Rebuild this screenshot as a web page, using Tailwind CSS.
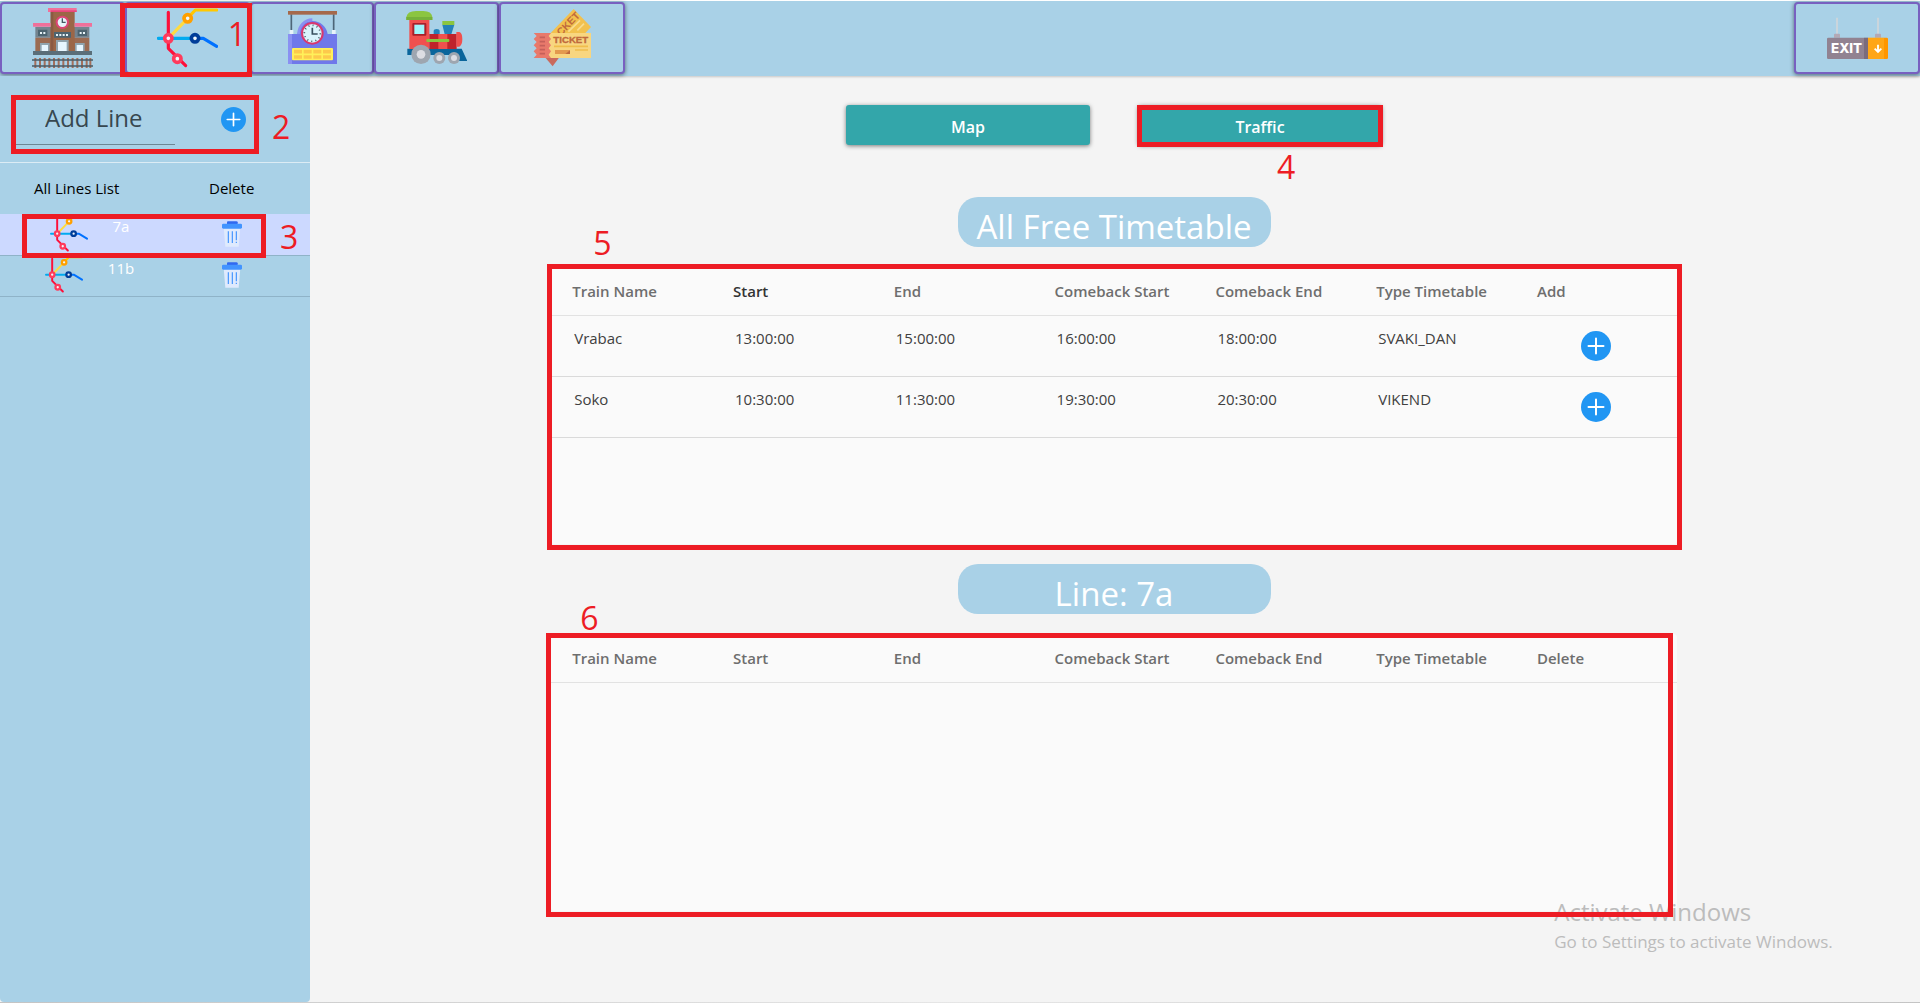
<!DOCTYPE html>
<html lang="en">
<head>
<meta charset="utf-8">
<title>Railway – Lines</title>
<script src="https://cdn.jsdelivr.net/npm/@tailwindcss/browser@4"></script>
</head>
<body class="flex min-h-screen flex-col bg-[#f4f4f4] font-['Open_Sans','Noto_Sans',sans-serif]">

<svg class="hidden" aria-hidden="true">
  <symbol id="line-map" viewBox="471 27 183 180">
    <g fill="none" stroke-width="9.5" stroke-linecap="round" stroke-linejoin="round">
      <path d="M505 118L563 58" stroke="#fedb41"/>
      <path d="M565 55L586 33H650" stroke="#ffc800"/>
      <path d="M475 118H580" stroke="#00aaf0"/>
      <path d="M590 118H610L650 142" stroke="#0071ff"/>
      <path d="M505 40V148L557 200" stroke="#fd0f3a"/>
    </g>
    <g fill="#f1f7fb" stroke-width="11">
      <circle cx="563" cy="58" r="11" stroke="#ffa000"/>
      <circle cx="505" cy="118" r="11" stroke="#ff3b5c"/>
      <circle cx="585" cy="118" r="11" stroke="#003d99"/>
      <circle cx="532" cy="179" r="11" stroke="#ff3b5c"/>
    </g>
  </symbol>
  <symbol id="plus" viewBox="0 0 30 30">
    <circle cx="15" cy="15" r="15" fill="#2196f3"/>
    <path d="M15 7.500V22.500M7.500 15H22.500" stroke="#fff" stroke-width="2" stroke-linecap="round"/>
  </symbol>
  <symbol id="trash" viewBox="0 0 60 78">
    <path d="M5 18H55L50 77H10Z" fill="#dfeafd"/>
    <path d="M15 10V4Q15 1 18 1H43Q47 1 47 4V10Z" fill="#3069f0"/>
    <rect y="8" width="60" height="15" rx="4" fill="#4294ff"/>
    <path d="M19 31V66M31 31V66M43 31V58M43 62V66" stroke="#4294ff" stroke-width="3.500"/>
  </symbol>
</svg>

<header class="flex justify-between border-t border-white bg-[#a9d1e7] pt-px pb-[2px] shadow-[0_1px_2px_#00000030]">
  <nav class="flex">
    <button aria-label="Stations" class="flex h-[72px] w-[125px] items-center justify-center rounded border-2 border-[#7860c0] bg-[#a9d1e7] shadow-[0_1px_4px_#00000080]">
      <svg class="h-[60px] w-[61px]" viewBox="96 27 183 180">
        <rect x="106" y="84" width="162" height="32" fill="#74848f"/>
        <rect x="106" y="116" width="162" height="42" fill="#9b6b52"/>
        <rect x="152" y="38" width="72" height="120" fill="#9b6647"/>
        <rect x="152" y="38" width="8" height="120" fill="#8a5a43"/>
        <rect x="144" y="27" width="86" height="12" fill="#f0709a"/><rect x="152" y="34" width="78" height="5" fill="#e8457b"/>
        <path d="M99 72H152V83H99ZM224 72H276V83H224Z" fill="#f0709a"/>
        <circle cx="187" cy="70" r="17" fill="#e6f4fa" stroke="#dc4475" stroke-width="6"/>
        <path d="M187 58V70H197" fill="none" stroke="#455a64" stroke-width="4"/>
        <path d="M114 92H142V111H114ZM233 92H261V111H233ZM162 99H213V116H162Z" fill="#4d6470"/>
        <path d="M120 102H136M239 102H255M168 108H208" stroke="#e8f4f8" stroke-width="6" stroke-dasharray="6 4"/>
        <path d="M120 132H149V158H120ZM225 132H254V158H225ZM168 123H206V158H168Z" fill="#90a4ae"/>
        <path d="M125 138H144V158H125ZM230 138H249V158H230ZM174 129H200V158H174Z" fill="#e6f6ff"/>
        <rect x="99" y="156" width="177" height="12" fill="#5a6e79"/>
        <path d="M106 177V207M120 177V207M134 177V207M148 177V207M162 177V207M176 177V207M190 177V207M204 177V207M218 177V207M232 177V207M246 177V207M260 177V207M271 177V207" stroke="#a46f5b" stroke-width="6"/>
        <path d="M96 183H279M96 201H279" stroke="#4a5b65" stroke-width="4"/>
      </svg>
    </button>
    <div class="relative">
      <button aria-label="Lines" class="flex h-[72px] w-[125px] items-center justify-center rounded border-2 border-[#7860c0] bg-[#a9d1e7] shadow-[0_1px_4px_#00000080]">
        <svg class="h-[60px] w-[61px]"><use href="#line-map"/></svg>
      </button>
      <div class="pointer-events-none absolute top-px -right-[2px] -bottom-[3px] -left-[5px] z-10 border-5 border-[#ed1c24]"></div>
      <span class="absolute top-2 right-1 z-10 text-[32px] leading-12 text-[#ed1c24]">1</span>
    </div>
    <button aria-label="Timetables" class="flex h-[72px] w-[124px] items-center justify-center rounded border-2 border-[#7860c0] bg-[#a9d1e7] shadow-[0_1px_4px_#00000080]">
      <svg class="h-[60px] w-[61px]" viewBox="96 27 183 180">
        <path d="M124 46V96M251 46V96" stroke="#4d6678" stroke-width="5"/>
        <rect x="114" y="36" width="147" height="11" fill="#a5694b"/>
        <path d="M119 93H130V106H119ZM246 93H257V106H246Z" fill="#e8f2fa"/>
        <path d="M114 105H142A46 46 0 0 1 233 105H261V195H114Z" fill="#7078ea"/>
        <path d="M114 105H126V195H114ZM142 105A46 46 0 0 1 187 58V66A38 38 0 0 0 150 105Z" fill="#8a90f2"/>
        <circle cx="187" cy="103" r="31" fill="#d9f4fc" stroke="#d9376e" stroke-width="6"/>
        <circle cx="187" cy="103" r="24" fill="none" stroke="#455a64" stroke-width="5" stroke-dasharray="3 9.560"/>
        <path d="M187 86V105H203" fill="none" stroke="#37505e" stroke-width="5"/>
        <rect x="126" y="147" width="123" height="37" rx="3" fill="#fff05a"/>
        <path d="M132 158H244M132 174H244" stroke="#fdc94c" stroke-width="11" stroke-dasharray="24 5"/>
      </svg>
    </button>
    <button aria-label="Trains" class="flex h-[72px] w-[125px] items-center justify-center rounded border-2 border-[#7860c0] bg-[#a9d1e7] shadow-[0_1px_4px_#00000080]">
      <svg class="h-[60px] w-[61px]" viewBox="470 27 183 180">
        <path d="M474 149H637L654 186H630L620 168H474Z" fill="#0a659b"/>
        <rect x="480" y="60" width="60" height="90" fill="#f0504e"/>
        <path d="M471 63V54Q474 36 500 36H522Q547 36 549 54V63Z" fill="#8bc540"/>
        <path d="M471 54H549V63H471Z" fill="#76b03a"/>
        <rect x="489" y="72" width="42" height="38" rx="3" fill="#a8202a"/><rect x="495" y="77" width="30" height="28" fill="#a0f5fa"/>
        <path d="M553 106V96Q553 90 562 90Q571 90 571 96V106ZM579 77H615L606 106H586Z" fill="#2481b9"/>
        <rect x="579" y="66" width="36" height="12" fill="#8bc540"/>
        <rect x="540" y="105" width="82" height="45" fill="#bf222b"/>
        <path d="M567 105H594V150H567ZM621 99H630Q639 102 639 120Q639 138 630 143H621Z" fill="#f0504e"/>
        <rect x="531" y="120" width="69" height="9" rx="3" fill="#8bc540"/>
        <g fill="#9ea6b0"><circle cx="515" cy="166" r="29"/><circle cx="570" cy="177" r="18"/><circle cx="614" cy="177" r="18"/></g>
        <g fill="#dcdde3"><circle cx="515" cy="166" r="13"/><circle cx="570" cy="177" r="9"/><circle cx="614" cy="177" r="9"/></g>
      </svg>
    </button>
    <button aria-label="Tickets" class="flex h-[72px] w-[126px] items-center justify-center rounded border-2 border-[#7860c0] bg-[#a9d1e7] shadow-[0_1px_4px_#00000080]">
      <svg class="h-[60px] w-[61px]" viewBox="846 27 183 180">
        <path d="M885 175L908 202L928 175Z" fill="#c96a5d"/>
        <path d="M902 102L971 30L1023 84L1004 104Z" fill="#f2c14e"/>
        <path d="M955 98L990 64M982 94L1002 74" stroke="#f9dc8e" stroke-width="5"/>
        <text transform="translate(933 112) rotate(-46)" font-family="Liberation Sans" font-weight="700" font-size="31" fill="#c0693c">CKET</text>
        <rect x="896" y="102" width="127" height="75" fill="#f8d680"/>
        <path d="M851 102H903L896 111L903 120L896 129L903 139L896 148L903 157L896 167L903 177H851L860 167L851 157L860 148L851 139L860 129L851 120L860 111Z" fill="#e8796b"/>
        <path d="M869 115H885M869 128H885M869 140H885M869 152H885M869 164H885" stroke="#c5605a" stroke-width="5"/>
        <text x="910" y="132" font-family="Liberation Sans" font-weight="700" font-size="29" stroke="#c0693c" fill="#c0693c">TICKET</text>
        <path d="M912 142H1014M975 153H1014" stroke="#f0bd4b" stroke-width="5"/>
        <path d="M915 153H960L948 165H915Z" fill="#e39a4e"/><path d="M960 153V165H946Z" fill="#c0693c"/>
      </svg>
    </button>
  </nav>
  <button aria-label="Exit" class="flex h-[72px] w-[126px] items-center justify-center rounded border-2 border-[#7860c0] bg-[#a9d1e7] shadow-[0_1px_4px_#00000080]">
    <svg class="h-[60px] w-[61px]" viewBox="201 25 183 180">
      <path d="M231 54V103M354 54V103" stroke="#cad5dc" stroke-width="6"/>
      <path d="M222 114V105Q222 102 225 102H237Q240 102 240 105V114ZM345 114V105Q345 102 348 102H360Q363 102 363 105V114Z" fill="#b3a9b6"/>
      <path d="M205 114H312V178H205Q201 178 201 174V118Q201 114 205 114Z" fill="#918291"/>
      <path d="M312 114H324V178H312Z" fill="#7b6c7d"/>
      <path d="M324 114H372V178H324Z" fill="#ffa617"/>
      <path d="M372 114H380Q384 114 384 118V174Q384 178 380 178H372Z" fill="#ff9600"/>
      <text x="213" y="160" font-family="Inter" font-weight="800" font-size="40" fill="#fff">EXIT</text>
      <path d="M354 135V157M344 147L354 157L364 147" fill="none" stroke="#fff" stroke-width="5.500"/>
    </svg>
  </button>
</header>

<div class="flex grow">
  <aside class="w-[310px] shrink-0 rounded-b bg-[#a9d1e7]">
    <form class="relative flex h-[87px] items-start border-b border-[#dcecf5] pt-[26px]">
      <input aria-label="Add Line" placeholder="Add Line" class="ml-3 h-[43px] w-[163px] border-b border-[#6d8794] pr-2 pb-3 pl-[33px] text-[24px] outline-none placeholder:text-[#37474f]">
      <button type="button" aria-label="Add line" class="mt-[5px] ml-[46px]"><svg class="size-[25px]"><use href="#plus"/></svg></button>
      <div class="pointer-events-none absolute top-[19px] left-[11px] h-[59px] w-[248px] border-5 border-[#ed1c24]"></div>
      <span class="absolute top-[27px] left-[272px] text-[32px] leading-12 text-[#ed1c24]">2</span>
    </form>
    <table class="w-full table-fixed text-left">
      <colgroup><col class="w-24"><col class="w-[50px]"><col></colgroup>
      <thead>
        <tr class="h-[51px] text-[15px] text-black">
          <th colspan="2" class="pl-[34px] font-normal">All Lines List</th>
          <th class="pl-[63px] font-normal">Delete</th>
        </tr>
      </thead>
      <tbody class="text-[15px] text-white">
        <tr class="relative h-[41px] border-b border-[#8fb3c8] bg-[#ccd9ff] align-top">
          <td class="pl-[50px]"><svg class="mt-px block h-[37px] w-[38px]"><use href="#line-map"/></svg></td>
          <td class="text-center leading-6">7a</td>
          <td class="pl-[76px]">
            <button aria-label="Delete line 7a" class="mt-[7px] block"><svg class="h-[26px] w-5"><use href="#trash"/></svg></button>
            <div class="pointer-events-none absolute top-0 left-[22px] h-11 w-[244px] border-5 border-[#ed1c24]"></div>
            <span class="absolute -top-px left-[280px] text-[32px] leading-12 text-[#ed1c24]">3</span>
          </td>
        </tr>
        <tr class="h-[41px] border-b border-[#8fb3c8] align-top">
          <td class="pl-[45px]"><svg class="block h-[37px] w-[38px]"><use href="#line-map"/></svg></td>
          <td class="text-center leading-6">11b</td>
          <td class="pl-[76px]"><button aria-label="Delete line 11b" class="mt-[6px] block"><svg class="h-[26px] w-5"><use href="#trash"/></svg></button></td>
        </tr>
      </tbody>
    </table>
  </aside>

  <main class="relative flex grow flex-col items-center pt-[29px] pr-[2px]">
    <div class="flex gap-12">
      <button class="h-10 w-[244px] rounded-[3px] bg-[#33a6aa] pt-1 text-[16px] font-semibold text-white shadow-[0_1px_4px_#00000080]">Map</button>
      <div class="relative">
        <button class="h-10 w-[244px] rounded-[3px] bg-[#33a6aa] pt-1 text-[16px] font-semibold text-white shadow-[0_1px_4px_#00000080]">Traffic</button>
        <div class="pointer-events-none absolute -inset-x-px top-0 -bottom-[2px] border-5 border-[#ed1c24]"></div>
        <span class="absolute top-[38px] left-[139px] text-[32px] leading-12 text-[#ed1c24]">4</span>
      </div>
    </div>

    <h1 class="mt-[52px] flex h-[50px] w-[313px] items-center justify-center rounded-[20px] bg-[#a9d1e7] pt-[10px] text-[33px] text-white">All Free Timetable</h1>
    <section class="relative mt-5 h-[277px] w-[70%] rounded bg-[#fafafa]">
      <table class="w-full table-fixed text-left text-[#404040]">
        <thead>
          <tr class="h-12 border-b border-[#e2e2e2] text-[15px] text-[#6e6e6e]">
            <th class="pl-[21px] font-semibold">Train Name</th><th class="pl-[21px] font-semibold text-[#333]">Start</th><th class="pl-[21px] font-semibold">End</th><th class="pl-[21px] font-semibold">Comeback Start</th><th class="pl-[21px] font-semibold">Comeback End</th><th class="pl-[21px] font-semibold">Type Timetable</th><th class="pl-[21px] font-semibold">Add</th>
          </tr>
        </thead>
        <tbody class="text-[15px] leading-6">
          <tr class="h-[61px] border-b border-[#dadada] align-top">
            <td class="pt-[10px] pl-[23px]">Vrabac</td><td class="pt-[10px] pl-[23px]">13:00:00</td><td class="pt-[10px] pl-[23px]">15:00:00</td><td class="pt-[10px] pl-[23px]">16:00:00</td><td class="pt-[10px] pl-[23px]">18:00:00</td><td class="pt-[10px] pl-[23px]">SVAKI_DAN</td>
            <td class="pt-[15px] pl-[65px]"><button aria-label="Add Vrabac" class="block"><svg class="size-[30px]"><use href="#plus"/></svg></button></td>
          </tr>
          <tr class="h-[61px] border-b border-[#dadada] align-top">
            <td class="pt-[10px] pl-[23px]">Soko</td><td class="pt-[10px] pl-[23px]">10:30:00</td><td class="pt-[10px] pl-[23px]">11:30:00</td><td class="pt-[10px] pl-[23px]">19:30:00</td><td class="pt-[10px] pl-[23px]">20:30:00</td><td class="pt-[10px] pl-[23px]">VIKEND</td>
            <td class="pt-[15px] pl-[65px]"><button aria-label="Add Soko" class="block"><svg class="size-[30px]"><use href="#plus"/></svg></button></td>
          </tr>
        </tbody>
      </table>
      <div class="pointer-events-none absolute -top-[3px] -right-[5px] -bottom-[6px] -left-1 border-5 border-[#ed1c24]"></div>
      <span class="absolute -top-12 left-[42px] text-[32px] leading-12 text-[#ed1c24]">5</span>
    </section>

    <h2 class="mt-5 flex h-[50px] w-[313px] items-center justify-center rounded-[20px] bg-[#a9d1e7] pt-[10px] text-[33px] text-white">Line: 7a</h2>
    <section class="relative z-10 mt-5 h-[277px] w-[70%] rounded">
      <table class="w-full table-fixed text-left">
        <thead>
          <tr class="h-12 border-b border-[#e2e2e2] text-[15px] text-[#6e6e6e]">
            <th class="pl-[21px] font-semibold">Train Name</th><th class="pl-[21px] font-semibold">Start</th><th class="pl-[21px] font-semibold">End</th><th class="pl-[21px] font-semibold">Comeback Start</th><th class="pl-[21px] font-semibold">Comeback End</th><th class="pl-[21px] font-semibold">Type Timetable</th><th class="pl-[21px] font-semibold">Delete</th>
          </tr>
        </thead>
      </table>
      <div class="absolute inset-0 -z-20 rounded bg-[#fafafa]"></div>
      <!-- Windows activation notice, floating over the table's corner -->
      <div class="absolute -bottom-[45px] left-[1003px] -z-10 whitespace-nowrap text-[#bcbcbc]">
        <p class="text-[24px] leading-8">Activate Windows</p>
        <p class="text-[17px] leading-7">Go to Settings to activate Windows.</p>
      </div>
      <div class="pointer-events-none absolute -top-px right-1 -bottom-[6px] -left-[5px] border-5 border-[#ed1c24]"></div>
      <span class="absolute -top-10 left-[29px] text-[32px] leading-12 text-[#ed1c24]">6</span>
    </section>
  </main>
</div>
<footer class="h-px bg-linear-to-r from-[#c4c4c4] via-[#e6e6e6] to-[#c4c4c4]"></footer>
</body>
</html>
